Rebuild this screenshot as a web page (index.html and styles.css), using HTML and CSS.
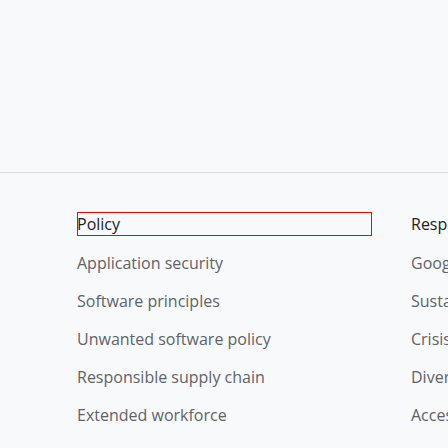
FILE: index.html
```html
<!DOCTYPE html>
<html lang="en">
<head>
<meta charset="utf-8">
<link rel="stylesheet" href="styles.css">
</head>
<body>
<div class="top"></div>
<footer class="links">
  <section class="col">
    <h3 class="heading focused">Policy</h3>
    <ul class="list">
      <li>Application security</li>
      <li>Software principles</li>
      <li>Unwanted software policy</li>
      <li>Responsible supply chain</li>
      <li>Extended workforce</li>
    </ul>
  </section>
  <section class="col">
    <h3 class="heading">Responsibility</h3>
    <ul class="list">
      <li>Google.org</li>
      <li>Sustainability</li>
      <li>Crisis response</li>
      <li>Diversity &amp; inclusion</li>
      <li>Accessibility</li>
    </ul>
  </section>
</footer>
</body>
</html>
```
FILE: styles.css
```css
html, body {
  margin: 0;
  padding: 0;
  background: #f8f9fa;
  overflow: hidden;
  width: 448px;
  height: 448px;
}
body {
  font-family: "Open Sans", Roboto, sans-serif;
  font-size: 16px;
  line-height: 24px;
}
.top {
  height: 172px;
}
.links {
  border-top: 1px solid #dadce0;
  padding: 39px 0 0 77px;
  display: grid;
  grid-template-columns: 295px 295px;
  column-gap: 39px;
  width: 800px;
}
.heading {
  margin: 0;
  font-size: 16px;
  font-weight: 400;
  color: #202124;
  line-height: 24px;
}
.focused {
  outline: 1px solid #ff0000;
  outline-offset: -1px;
}
.list {
  list-style: none;
  margin: 15px 0 0;
  padding: 0;
  display: flex;
  flex-direction: column;
  gap: 14px;
  color: #5f6368;
  white-space: nowrap;
}
```
